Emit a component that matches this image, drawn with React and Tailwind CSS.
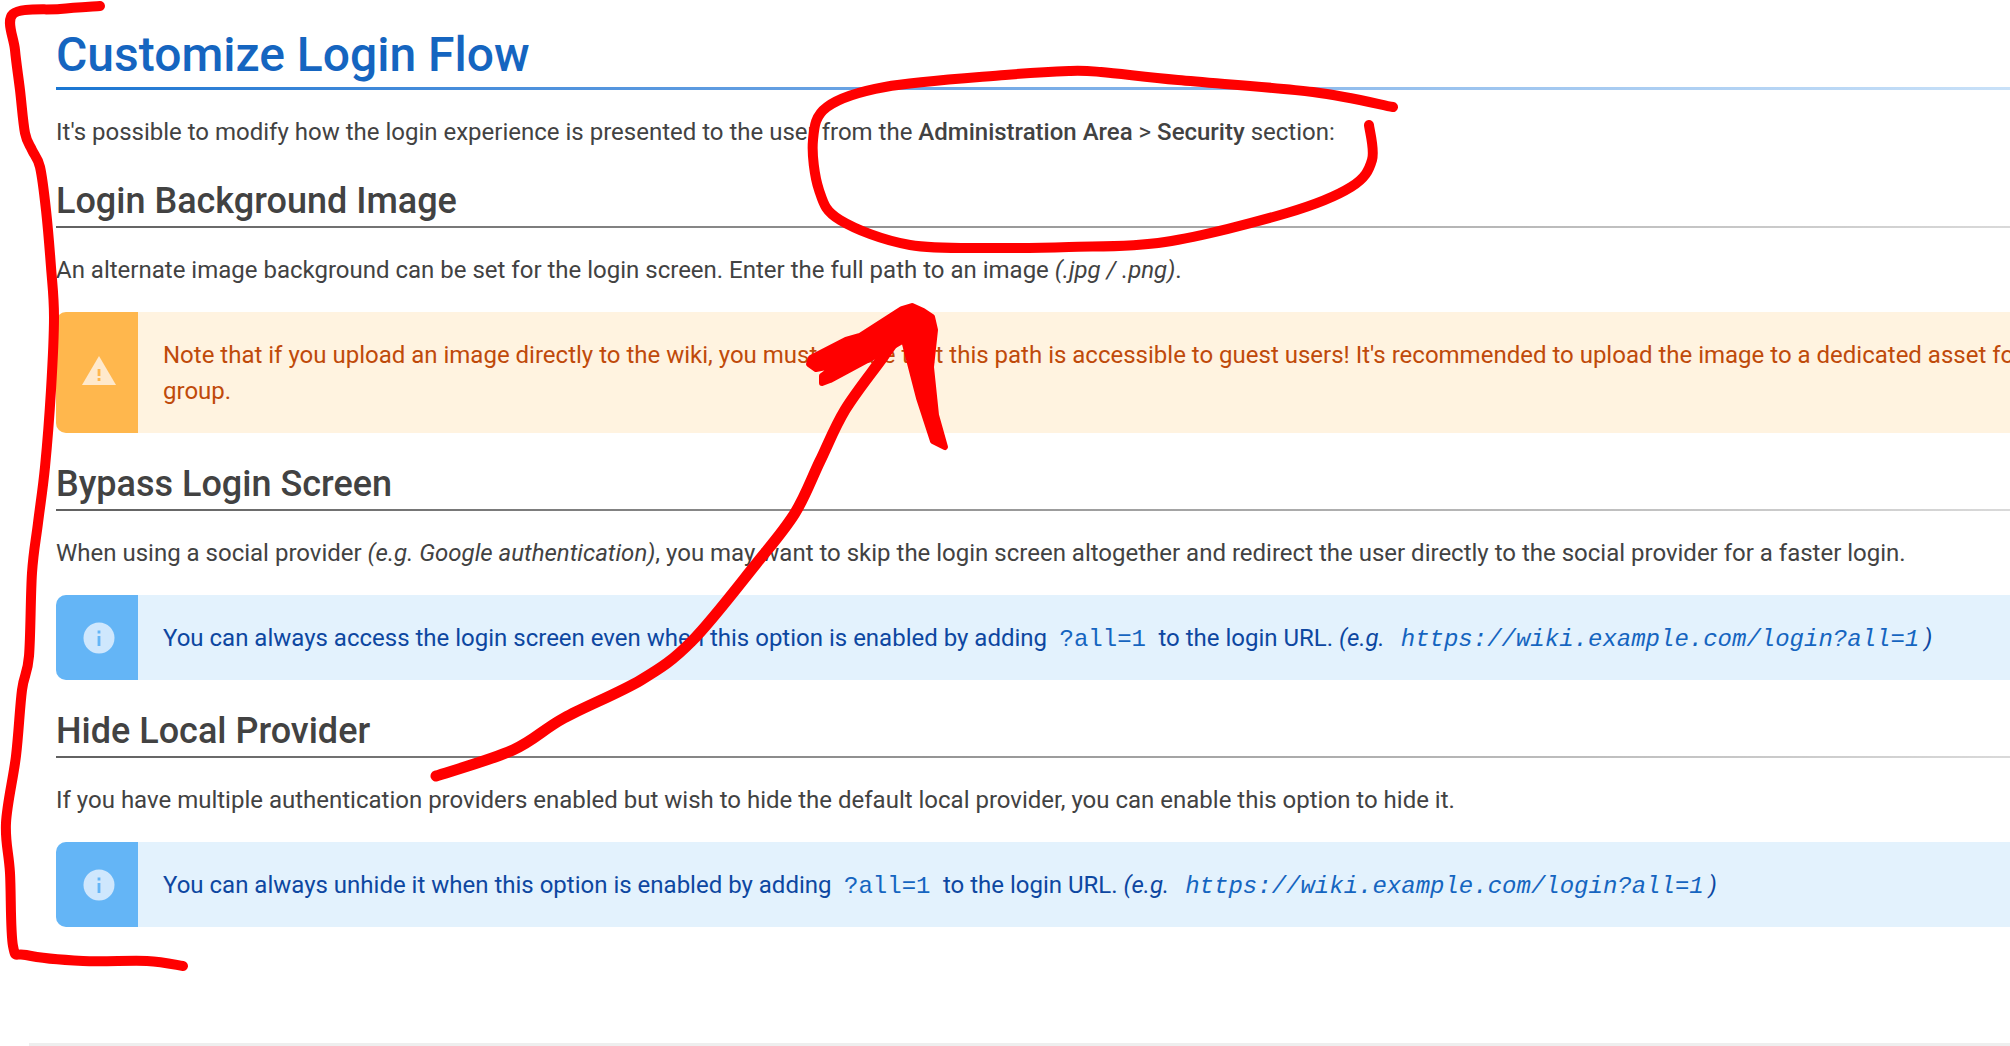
import React from "react";

const Mono = ({ children, italic }) => (
  <code className={`font-['Liberation_Mono',monospace] leading-none text-[#1565c0] ${italic ? "italic ml-[16px] mr-[5px]" : "mx-[12.5px]"}`}>
    {children}
  </code>
);

const Heading = ({ children }) => (
  <div className="mt-[26px]">
    <h2 className="text-[36px] leading-[50px] font-medium text-[#424242]">{children}</h2>
    <div className="h-[2px] bg-gradient-to-r from-[#616161] to-[#eeeeee] to-[95%]"></div>
  </div>
);

const Paragraph = ({ children }) => (
  <p className="mt-[24px] text-[#424242] text-[24px] leading-[36px]">{children}</p>
);

const WarnIcon = () => (
  <svg width="34" height="30" viewBox="0 0 34 30" className="ml-[4px] mb-[4px]">
    <path d="M17 0 L34 29 L0 29 Z" fill="#ffe9cc" />
    <rect x="15.6" y="13" width="2.8" height="7" fill="#ffb74d" />
    <rect x="15.6" y="22" width="2.8" height="3" fill="#ffb74d" />
  </svg>
);

const InfoIcon = () => (
  <svg width="32" height="32" viewBox="0 0 32 32" className="ml-[4px]">
    <circle cx="16" cy="16" r="15.5" fill="#cfe7fd" />
    <rect x="14.6" y="14" width="2.8" height="10" fill="#64b5f6" />
    <rect x="14.6" y="8.5" width="2.8" height="3" fill="#64b5f6" />
  </svg>
);

const Callout = ({ tone, children }) => {
  const warn = tone === "warn";
  return (
    <div className={`mt-[24px] flex rounded-l-[10px] overflow-hidden ${warn ? "bg-[#fff3e0] text-[#bf4a0a]" : "bg-[#e3f2fd] text-[#0d47a1]"}`}>
      <div className={`w-[82px] shrink-0 flex items-center justify-center ${warn ? "bg-[#ffb74d]" : "bg-[#64b5f6]"}`}>
        {warn ? <WarnIcon /> : <InfoIcon />}
      </div>
      <div className="pl-[25px] pr-[10px] py-[24.5px] text-[24px] leading-[36px]">{children}</div>
    </div>
  );
};

// smooth line through hand-read points
const smooth = (pts) => {
  let d = `M${pts[0][0]} ${pts[0][1]}`;
  for (let i = 0; i < pts.length - 1; i++) {
    const p0 = pts[i - 1] || pts[i];
    const p1 = pts[i];
    const p2 = pts[i + 1];
    const p3 = pts[i + 2] || p2;
    d += ` C${p1[0] + (p2[0] - p0[0]) / 6} ${p1[1] + (p2[1] - p0[1]) / 6} ${p2[0] - (p3[0] - p1[0]) / 6} ${p2[1] - (p3[1] - p1[1]) / 6} ${p2[0]} ${p2[1]}`;
  }
  return d;
};

const bracket = [[100,6],[60,9],[13,14],[15,50],[20,90],[25,133],[32,150],[40,167],[46,210],[51,267],[54,317],[51,390],[45,467],[38,523],[32,573],[29,656],[22,690],[16,756],[6,823],[10,873],[13,946],[26,955],[83,961],[147,961],[183,966]];
const loop = [[1393,107],[1313,92],[1178,80],[1101,72],[1069,71],[1005,75],[885,87],[827,107],[813,140],[819,190],[840,220],[910,245],[1005,248],[1069,247],[1165,242],[1287,213],[1351,187],[1372,160],[1369,125]];
const shaft = [[436,776],[513,750],[564,718],[641,680],[692,641],[756,564],[795,513],[820,461],[845,410],[883,357],[905,325]];

// the red marker scribbles sit on top of the page
const Scribbles = () => (
  <svg viewBox="0 0 2010 1046" className="absolute inset-0 w-[2010px] h-[1046px] pointer-events-none" fill="none" stroke="#ff0000" strokeWidth="10" strokeLinecap="round" strokeLinejoin="round">
    <path d={smooth(bracket)} />
    <path d={smooth(loop)} />
    <path d={smooth(shaft)} strokeWidth="11" />
    <path
      d="M904 340 L919 398 L933 441 L945 447 L936 415 L931 367 L935 330 L932 317 L923 311 L912 306 L902 309 L860 336 L846 340 L811 358 L809 364 L816 369 L826 367 L844 360 L822 376 L822 383 L830 380 L895 345 Z"
      fill="#ff0000"
      strokeWidth="6"
    />
  </svg>
);

export default function App() {
  return (
    <div className="relative h-[1046px] w-full overflow-hidden bg-white font-['Roboto',sans-serif]">
      <div className="w-[2443px] pl-[56px] pt-[23px]">
        <h1 className="text-[48px] leading-[64px] font-medium text-[#1565c0]">Customize Login Flow</h1>
        <div className="h-[3px] bg-gradient-to-r from-[#1976d2] to-[#e3f2fd] to-[95%]"></div>
        <p className="mt-[24px] text-[#424242] text-[24px] leading-[36px]">
          It's possible to modify how the login experience is presented to the user from the <strong className="font-medium">Administration Area</strong> &gt; <strong className="font-medium">Security</strong> section:
        </p>

        <Heading>Login Background Image</Heading>
        <Paragraph>
          An alternate image background can be set for the login screen. Enter the full path to an image <em>(.jpg / .png)</em>.
        </Paragraph>
        <Callout tone="warn">
          Note that if you upload an image directly to the wiki, you must ensure that this path is accessible to guest users! It's recommended to upload the image to a dedicated asset folder with read-access for the guest group.
        </Callout>

        <Heading>Bypass Login Screen</Heading>
        <Paragraph>
          When using a social provider <em>(e.g. Google authentication)</em>, you may want to skip the login screen altogether and redirect the user directly to the social provider for a faster login.
        </Paragraph>
        <Callout tone="info">
          You can always access the login screen even when this option is enabled by adding<Mono>?all=1</Mono>to the login URL. <em>(e.g.<Mono italic>https://wiki.example.com/login?all=1</Mono>)</em>
        </Callout>

        <Heading>Hide Local Provider</Heading>
        <Paragraph>
          If you have multiple authentication providers enabled but wish to hide the default local provider, you can enable this option to hide it.
        </Paragraph>
        <Callout tone="info">
          You can always unhide it when this option is enabled by adding<Mono>?all=1</Mono>to the login URL. <em>(e.g.<Mono italic>https://wiki.example.com/login?all=1</Mono>)</em>
        </Callout>
      </div>
      <div className="absolute left-[29px] right-0 bottom-0 h-[3px] bg-[#eeeeee]"></div>
      <Scribbles />
    </div>
  );
}
